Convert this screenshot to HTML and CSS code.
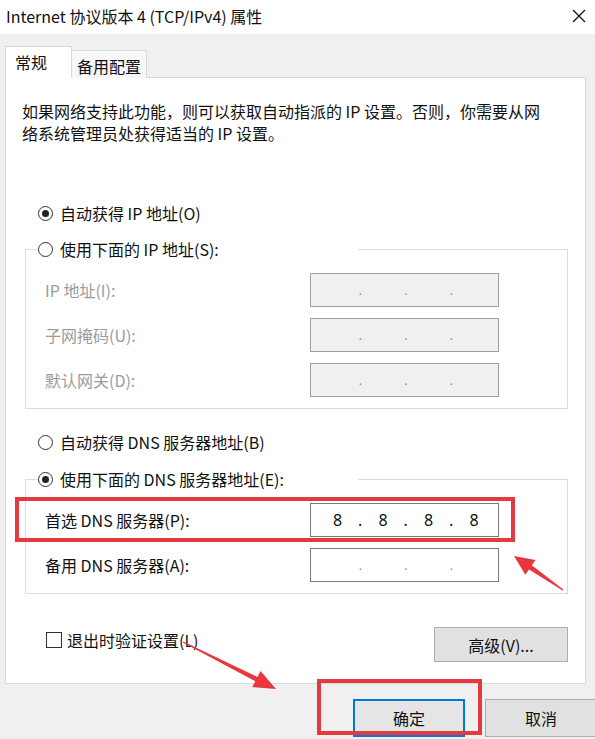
FILE: index.html
```html
<!DOCTYPE html>
<html lang="zh-CN">
  <head>
    <meta charset="UTF-8" />
    <title>Internet 协议版本 4 (TCP/IPv4) 属性</title>
    <link rel="stylesheet" href="styles.css">
  </head>
  <body>
    <div class="window">
      <div class="titlebar">
        <span class="title">Internet 协议版本 4 (TCP/IPv4) 属性</span>
        <svg class="close" width="14" height="14" viewBox="0 0 14 14">
          <path d="M1 1 L13 13 M13 1 L1 13" stroke="#111" stroke-width="1.3" fill="none" />
        </svg>
      </div>

      <div class="tabs">
        <div class="tab active">常规</div>
        <div class="tab">备用配置</div>
      </div>

      <div class="panel">
        <p class="desc">如果网络支持此功能，则可以获取自动指派的 IP 设置。否则，你需要从网<br>络系统管理员处获得适当的 IP 设置。</p>

        <label class="radio first"><span class="dot checked"></span>自动获得 IP 地址(O)</label>

        <fieldset class="group disabled">
          <legend><label class="radio"><span class="dot"></span>使用下面的 IP 地址(S):</label></legend>
          <div class="field">
            <span class="field-label">IP 地址(I):</span>
            <div class="ipbox"><span class="oct"></span><span class="sep">.</span><span class="oct"></span><span class="sep">.</span><span class="oct"></span><span class="sep">.</span><span class="oct"></span></div>
          </div>
          <div class="field">
            <span class="field-label">子网掩码(U):</span>
            <div class="ipbox"><span class="oct"></span><span class="sep">.</span><span class="oct"></span><span class="sep">.</span><span class="oct"></span><span class="sep">.</span><span class="oct"></span></div>
          </div>
          <div class="field">
            <span class="field-label">默认网关(D):</span>
            <div class="ipbox"><span class="oct"></span><span class="sep">.</span><span class="oct"></span><span class="sep">.</span><span class="oct"></span><span class="sep">.</span><span class="oct"></span></div>
          </div>
        </fieldset>

        <label class="radio dns-auto"><span class="dot"></span>自动获得 DNS 服务器地址(B)</label>

        <fieldset class="group dns">
          <legend><label class="radio"><span class="dot checked"></span>使用下面的 DNS 服务器地址(E):</label></legend>
          <div class="field">
            <span class="field-label">首选 DNS 服务器(P):</span>
            <div class="ipbox"><span class="oct">8</span><span class="sep">.</span><span class="oct">8</span><span class="sep">.</span><span class="oct">8</span><span class="sep">.</span><span class="oct">8</span></div>
          </div>
          <div class="field">
            <span class="field-label">备用 DNS 服务器(A):</span>
            <div class="ipbox"><span class="oct"></span><span class="sep">.</span><span class="oct"></span><span class="sep">.</span><span class="oct"></span><span class="sep">.</span><span class="oct"></span></div>
          </div>
        </fieldset>

        <div class="bottom-row">
          <label class="check"><span class="box"></span>退出时验证设置(L)</label>
          <button class="btn advanced">高级(V)...</button>
        </div>
      </div>

      <div class="footer">
        <button class="btn default">确定</button>
        <button class="btn">取消</button>
      </div>

      <!-- 标注：红框和箭头 -->
      <svg class="marks" width="595" height="739" viewBox="0 0 595 739">
        <rect x="17" y="499" width="496" height="41" fill="none" stroke="#e23a3f" stroke-width="4" />
        <rect x="319" y="681" width="161" height="52" fill="none" stroke="#e23a3f" stroke-width="4" />
        <polygon fill="#e8383d" points="183.2,641.6 257.5,676.9 260.5,671.1 276,689 252.3,687.1 255.3,681.3 182.8,642.4" />
        <polygon fill="#e8383d" points="563.4,589.4 531.8,565.3 535.5,560 514,556 525.3,574.8 529,569.5 562.6,590.6" />
      </svg>
    </div>
  </body>
</html>
```

FILE: styles.css
```css
* {
  margin: 0;
  padding: 0;
  box-sizing: border-box;
}
body {
  background-color: #f0f0f0;
  font-family: "Noto Sans CJK SC", "Noto Sans", sans-serif;
  font-size: 16px;
  color: #111;
}
.window {
  position: relative;
  width: 595px;
  height: 739px;
  overflow: hidden;
  background-color: #f0f0f0;
}
.titlebar {
  height: 34px;
  background-color: #fff;
  display: flex;
  align-items: center;
  justify-content: space-between;
  padding: 0 9px 2px 6px;
  line-height: 22px;
}

/* 选项卡 */
.tabs {
  position: relative;
  z-index: 1;
  height: 44px;
  display: flex;
  align-items: flex-end;
  padding-left: 5px;
  margin-bottom: -1px;
}
.tab {
  height: 28px;
  padding: 4px 5px 0;
  border: 1px solid #d9d9d9;
  border-left: none;
  border-bottom: none;
  background-color: #f7f7f7;
  line-height: 22px;
}
.tab.active {
  width: 67px;
  height: 32px;
  padding: 4px 9px 0;
  border-left: 1px solid #d9d9d9;
  background-color: #fff;
}

.panel {
  width: 581px;
  height: 607px;
  margin-left: 5px;
  background-color: #fff;
  border: 1px solid #d9d9d9;
}
.desc {
  margin: 22px 0 0 16px;
  line-height: 22px;
}

/* 单选框 */
.radio {
  display: flex;
  align-items: center;
  height: 22px;
  line-height: 22px;
  white-space: nowrap;
}
.radio.first {
  margin: 58px 0 0 32px;
}
.radio.dns-auto {
  margin: 22px 0 0 32px;
}
.dot {
  position: relative;
  width: 15px;
  height: 15px;
  border: 1px solid #333;
  border-radius: 50%;
  margin-right: 7px;
  background-color: #fff;
}
.dot.checked::after {
  content: "";
  position: absolute;
  left: 3px;
  top: 3px;
  width: 7px;
  height: 7px;
  border-radius: 50%;
  background-color: #222;
}

/* 分组框 */
.group {
  width: 543px;
  margin: 14px 0 0 19px;
  border: 1px solid #dcdcdc;
  padding: 13px 0 11px 12px;
}
.group.dns {
  margin-top: 15px;
}
.group legend {
  width: 320px;
  padding: 0;
}
.field {
  display: flex;
  align-items: center;
  height: 34px;
  padding-left: 7px;
}
.field + .field {
  margin-top: 11px;
}
.field-label {
  width: 265px;
  line-height: 22px;
}
.disabled .field-label {
  color: #9c9c9c;
}
.ipbox {
  width: 189px;
  height: 34px;
  display: flex;
  align-items: center;
  padding-left: 8px;
  border: 1px solid #7a7a7a;
  background-color: #fff;
  font-family: "Noto Sans", sans-serif;
}
.disabled .ipbox {
  background-color: #f0f0f0;
  border-color: #a0a0a0;
}
.oct {
  width: 37px;
  text-align: center;
}
.sep {
  width: 8.5px;
  text-align: center;
}
.disabled .sep,
.ipbox .oct:empty + .sep {
  color: #8a8a8a;
  font-size: 12px;
}

.bottom-row {
  display: flex;
  justify-content: space-between;
  align-items: flex-start;
  margin: 33px 17px 0 40px;
}
.check {
  display: flex;
  align-items: center;
  margin-top: 2px;
  line-height: 22px;
}
.box {
  width: 16px;
  height: 16px;
  border: 1px solid #333;
  margin-right: 5px;
  background-color: #fff;
}

/* 按钮 */
.btn {
  font-family: inherit;
  font-size: 16px;
  color: #111;
  background-color: #e1e1e1;
  border: 1px solid #adadad;
}
.advanced {
  width: 134px;
  height: 35px;
}
.footer {
  display: flex;
  gap: 20px;
  margin-top: 15px;
  padding-left: 353px;
}
.footer .btn {
  flex: none;
  width: 112px;
  height: 38px;
}
.footer .default {
  border: 2px solid #0078d7;
  background-color: #e5e5e5;
}

.marks {
  position: absolute;
  left: 0;
  top: 0;
  pointer-events: none;
}
```
